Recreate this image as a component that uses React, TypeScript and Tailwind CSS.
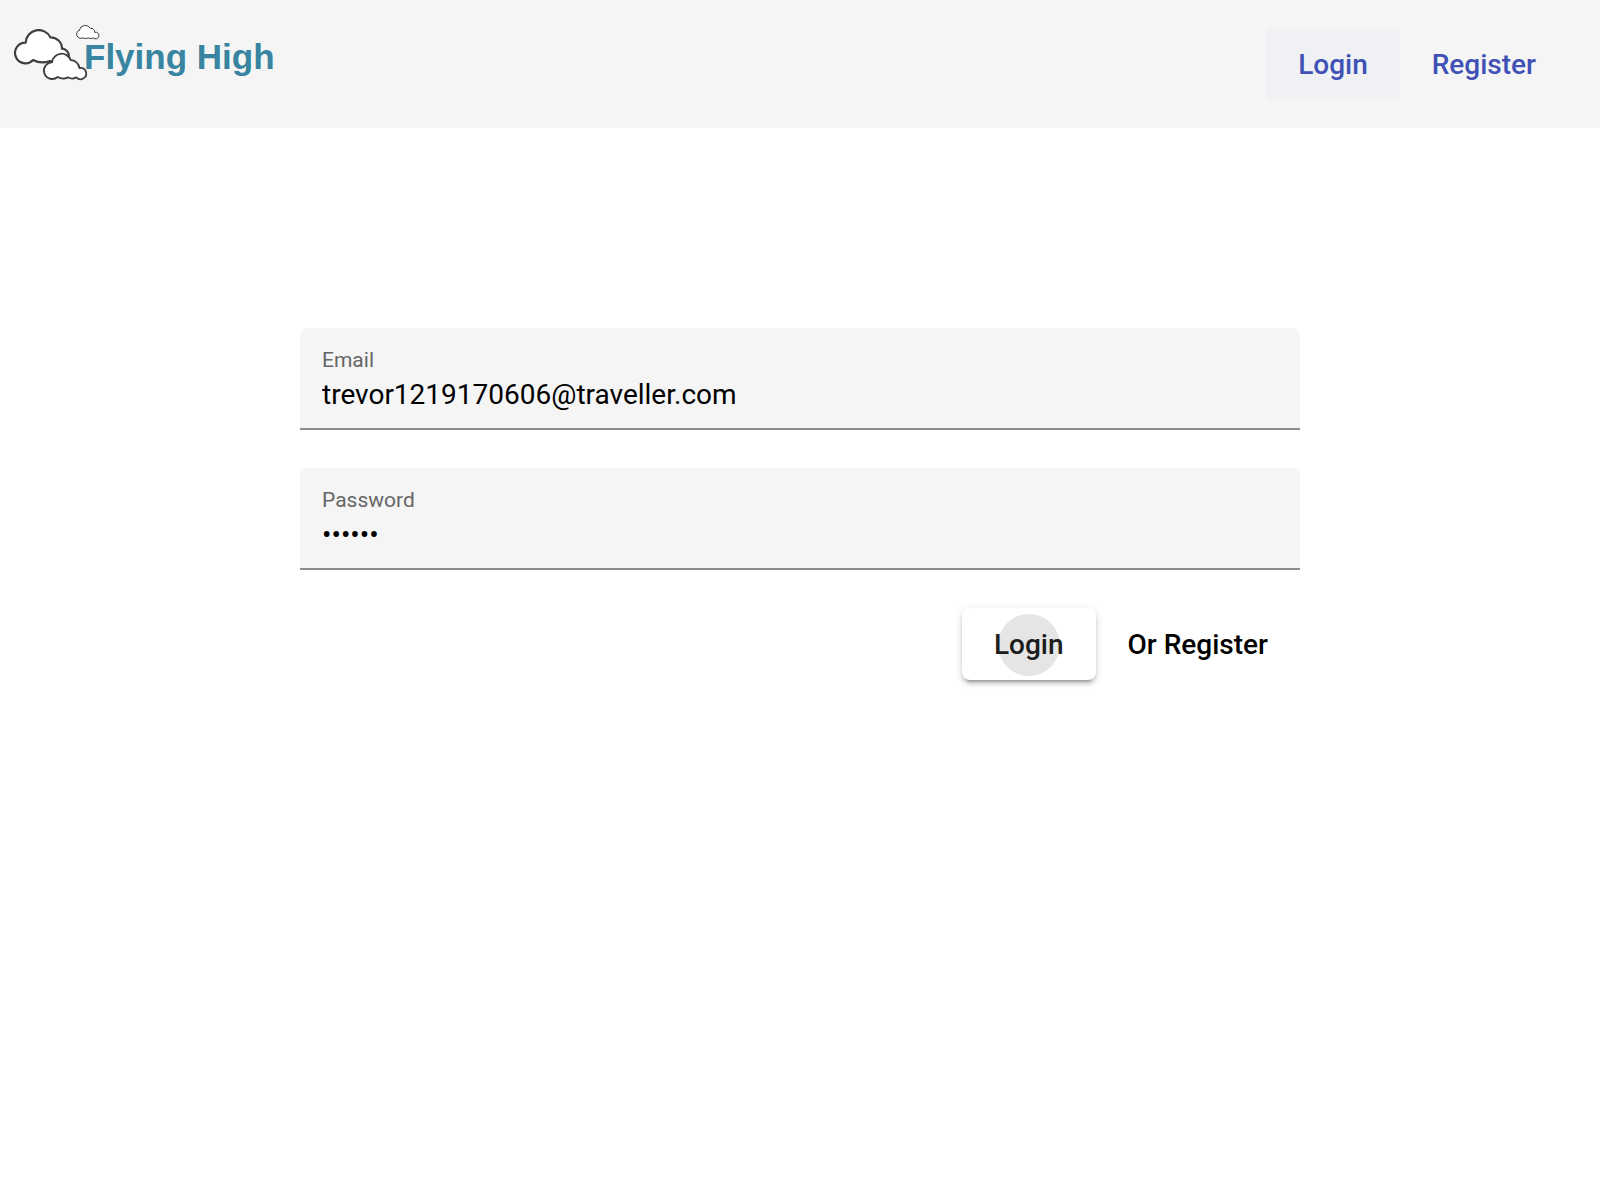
import { useState } from 'react';
import type { InputHTMLAttributes } from 'react';

function CloudLogo() {
  return (
    <svg
      viewBox="0 60 252 222"
      className="h-[74px] w-[84px] shrink-0 overflow-visible"
      fill="#ffffff"
      stroke="#3f3f3f"
      strokeLinejoin="round"
      strokeLinecap="round"
      aria-hidden="true"
    >
      <path
        strokeWidth="6.5"
        d="M77 128A39 39 0 0 1 151 112A34 34 0 0 1 186 146A23 23 0 0 1 207 168Q190 190 150 183Q124 193 99 180A31 31 0 1 1 77 128Z"
      />
      <path
        strokeWidth="5.5"
        d="M156 187A29 29 0 0 1 212 180A27 27 0 0 1 238 204A17 17 0 1 1 229 232Q217 240 204 232Q189 240 173 231A25 25 0 1 1 156 187Z"
      />
      <path
        strokeWidth="3"
        d="M238 90A18 18 0 0 1 271 85A11 11 0 0 1 284 97A10 10 0 1 1 280 114Q273 117 265 114Q257 117 248 114A13 13 0 1 1 238 90Z"
      />
    </svg>
  );
}

type FieldProps = InputHTMLAttributes<HTMLInputElement> & { id: string; label: string };

function Field({ id, label, ...input }: FieldProps) {
  return (
    <div className="flex h-[102px] flex-col rounded-t-lg border-b-2 border-[#8c8c8c] bg-[#f5f5f5] px-[22px] pt-5">
      <label htmlFor={id} className="text-[21px] leading-6 text-[#666666]">
        {label}
      </label>
      <input
        id={id}
        className="h-11 w-full bg-transparent text-[28px] text-black outline-none"
        {...input}
      />
    </div>
  );
}

export default function App() {
  const [email, setEmail] = useState('trevor1219170606@traveller.com');
  const [password, setPassword] = useState('flying');

  return (
    <div className="min-h-screen bg-white font-['Roboto',sans-serif]">
      <header className="flex h-32 items-start justify-between bg-[#f5f5f5] pr-8">
        <a href="#home" className="flex items-center pt-5">
          <CloudLogo />
          <span className="font-['Liberation_Sans',sans-serif] text-[35px] leading-10 font-bold text-[#3884a1]">
            Flying High
          </span>
        </a>
        <nav className="flex self-center text-[28px] leading-[70px] font-medium text-[#3f51b5]">
          <a href="#login" className="rounded-lg bg-[#eff1f4] px-8 pt-0.5">
            Login
          </a>
          <a href="#register" className="rounded-lg px-8 pt-0.5">
            Register
          </a>
        </nav>
      </header>

      <main className="px-8 pt-[200px]">
        <form
          className="mx-auto flex w-full max-w-[1000px] flex-col gap-[38px]"
          onSubmit={(event) => event.preventDefault()}
        >
          <Field
            id="email"
            label="Email"
            type="email"
            value={email}
            onChange={(event) => setEmail(event.target.value)}
          />
          <Field
            id="password"
            label="Password"
            type="password"
            value={password}
            onChange={(event) => setPassword(event.target.value)}
          />
          <div className="flex justify-end text-[28px] leading-[70px] font-medium text-black">
            <button
              type="submit"
              className="relative overflow-hidden rounded-lg bg-white px-8 pt-0.5 text-[#212121] shadow-[0_6px_2px_-4px_rgba(0,0,0,0.2),0_4px_4px_0_rgba(0,0,0,0.14),0_2px_10px_0_rgba(0,0,0,0.12)]"
            >
              Login
              <span className="absolute inset-x-0 top-1.5 mx-auto size-[62px] rounded-full bg-black/10" />
            </button>
            <button type="button" className="rounded-lg px-8 pt-0.5">
              Or Register
            </button>
          </div>
        </form>
      </main>
    </div>
  );
}
